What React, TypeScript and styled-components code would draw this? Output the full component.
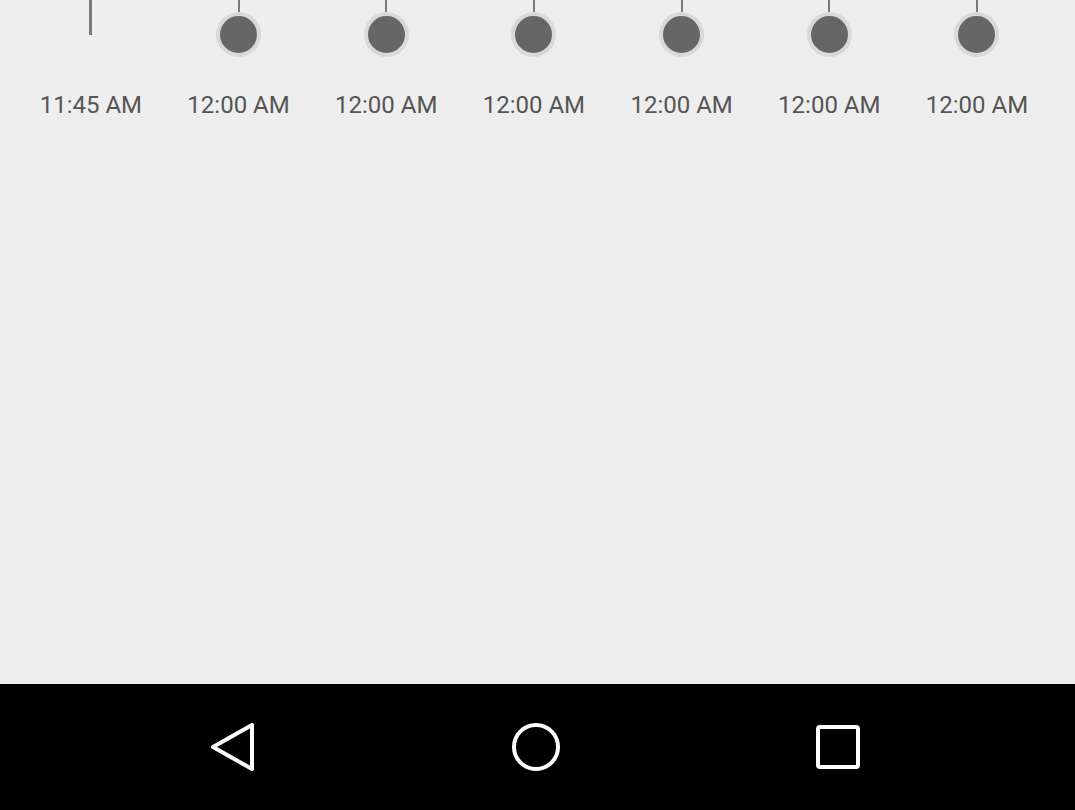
import React from "react";
import styled, { createGlobalStyle } from "styled-components";

const Global = createGlobalStyle`
  html, body { margin: 0; padding: 0; background: #eeeeee; }
  body { font-family: Roboto, "Noto Sans", sans-serif; }
`;

const Screen = styled.div`
  width: 1075px;
  height: 810px;
  display: flex;
  flex-direction: column;
  background: #eeeeee;
  overflow: hidden;
`;

const Timeline = styled.div`
  flex: 1;
  display: flex;
  align-items: flex-start;
  padding-left: 17px;
`;

const Slot = styled.div`
  width: 147.7px;
  flex: none;
  display: flex;
  flex-direction: column;
  align-items: center;
`;

const Marker = styled.div`
  height: 60px;
  width: 100%;
  display: flex;
  flex-direction: column;
  align-items: center;
`;

const Stem = styled.div<{ $h: number; $w: number }>`
  width: ${(p) => p.$w}px;
  height: ${(p) => p.$h}px;
  background: #7a7a7a;
  flex: none;
`;

const Dot = styled.div`
  width: 37px;
  height: 37px;
  border-radius: 50%;
  background: #666666;
  border: 4px solid #d9d9d9;
  flex: none;
`;

const Time = styled.div`
  margin-top: 30px;
  font-size: 24px;
  color: #555555;
  line-height: 30px;
  white-space: nowrap;
`;

const NavBar = styled.div`
  height: 126px;
  background: #000;
  display: flex;
  align-items: center;
  justify-content: center;
  padding-right: 4px;
`;

const NavButton = styled.div`
  width: 302px;
  display: flex;
  justify-content: center;
  align-items: center;
`;

const times = ["12:00 AM", "12:00 AM", "12:00 AM", "12:00 AM", "12:00 AM", "12:00 AM"];

export default function App() {
  return (
    <>
      <Global />
      <Screen>
        <Timeline>
          <Slot>
            <Marker>
              <Stem $h={35} $w={3} />
            </Marker>
            <Time>11:45 AM</Time>
          </Slot>
          {times.map((t, i) => (
            <Slot key={i}>
              <Marker>
                <Stem $h={12} $w={2} />
                <Dot />
              </Marker>
              <Time>{t}</Time>
            </Slot>
          ))}
        </Timeline>
        <NavBar>
          <NavButton>
            <svg width="50" height="52" viewBox="0 0 50 52">
              <path d="M43 4 L43 48 L4 26 Z" fill="none" stroke="#fff" strokeWidth="4" strokeLinejoin="round" />
            </svg>
          </NavButton>
          <NavButton>
            <svg width="52" height="52" viewBox="0 0 52 52">
              <circle cx="26" cy="26" r="22" fill="none" stroke="#fff" strokeWidth="4" />
            </svg>
          </NavButton>
          <NavButton>
            <svg width="48" height="48" viewBox="0 0 48 48">
              <rect x="4" y="4" width="40" height="40" rx="2" fill="none" stroke="#fff" strokeWidth="4" />
            </svg>
          </NavButton>
        </NavBar>
      </Screen>
    </>
  );
}
